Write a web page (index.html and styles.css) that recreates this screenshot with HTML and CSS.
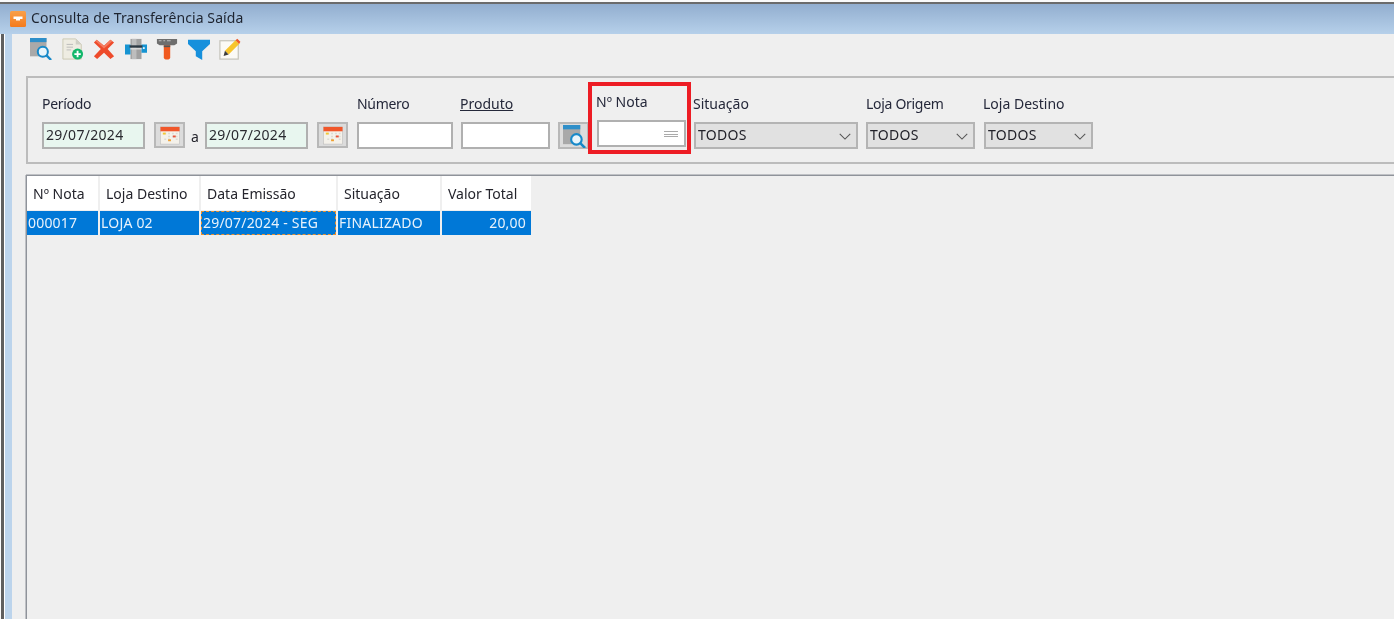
FILE: index.html
```html
<!DOCTYPE html>
<html lang="pt-BR">
<head>
<meta charset="utf-8">
<title>Consulta de Transferência Saída</title>
<link rel="stylesheet" href="styles.css">
</head>
<body>
<svg class="defs" width="0" height="0" aria-hidden="true">
  <symbol id="i-search" viewBox="0 0 24 24">
    <rect x="0" y="0" width="18" height="20" fill="#a9a9a9"/>
    <rect x="0" y="0" width="18" height="4.500" fill="#2f8fc9"/>
    <circle cx="14" cy="15" r="5.500" fill="#e9f5fb" stroke="#1789c9" stroke-width="2.200"/>
    <path d="M18 19l5 5" stroke="#1789c9" stroke-width="2.600" fill="none"/>
  </symbol>
  <symbol id="i-cal" viewBox="0 0 24 22">
    <rect x="2" y="2" width="20" height="18" fill="#f4f1ea" stroke="#bbb" stroke-width=".6"/>
    <rect x="2" y="2" width="20" height="4.600" fill="#f0562a"/>
    <path d="M6 9h2M10 9h2M14 9h2M18 9h2M10 12h2M14 12h2M18 12h2M6 15h2M10 15h2M18 15h2" stroke="#dcdad4" stroke-width="1.600"/>
    <rect x="4.500" y="8" width="3" height="2" fill="#f3c733"/>
    <rect x="15" y="11" width="3" height="2" fill="#e8553a"/>
    <rect x="10" y="15" width="3" height="2" fill="#f0a030"/>
  </symbol>
</svg>
<div class="window">
  <header class="titlebar">
    <svg class="app-icon" viewBox="0 0 16 16"><defs><linearGradient id="og" x1="0" y1="0" x2="0" y2="1"><stop offset="0" stop-color="#f9a04a"/><stop offset="1" stop-color="#f47a1c"/></linearGradient></defs><rect width="16" height="16" rx="1.500" fill="url(#og)"/><path d="M3.500 5.500h9v2.500H10v1.500H6V8H3.500z" fill="#fff"/></svg>
    <span>Consulta de Transferência Saída</span>
  </header>
  <div class="shell">
    <div class="content">
      <nav class="toolbar">
        <svg class="tool" viewBox="0 0 24 24"><use href="#i-search"/></svg>
        <svg class="tool" viewBox="0 0 24 24"><path d="M1 1h14l6 6v16H1z" fill="#eeece2" stroke="#c9c7b0"/><path d="M15 1v6h6z" fill="#cfcfc6"/><path d="M5 7h7M5 10h7M5 13h5" stroke="#b9b9b9"/><circle cx="17" cy="17.500" r="6" fill="#12b76a"/><path d="M17 14v7M13.500 17.500h7" stroke="#fff" stroke-width="2"/></svg>
        <svg class="tool" viewBox="0 0 24 24"><path d="M4 2l8 6.500L19 2l4 3-7 7 7 8-4 3-7-7-7.500 7L1 20l7.500-8L1 5z" fill="#ee4b2b"/><path d="M4 2l8 6.500L19 2l2 1.500-9 8-9-8z" fill="#f47a5e"/></svg>
        <svg class="tool" viewBox="0 0 24 24"><rect x="6" y="1" width="12" height="22" fill="#a0a0a0"/><rect x="7.500" y="1" width="5" height="22" fill="#bdbdbd"/><path d="M0 7h6v11H0zM18 7h6v9h-6z" fill="#1694d2"/><rect x="5" y="8" width="14" height="2.500" fill="#2d3a44"/><rect x="19.500" y="10" width="2" height="2" fill="#e8f4fa"/><rect x="6" y="11" width="12" height="1.500" fill="#dcdcdc"/></svg>
        <svg class="tool" viewBox="0 0 24 24"><path d="M1 1h22v5l-3 2H4L1 6z" fill="#6e6e6e"/><path d="M3 3h3M8 3h2M12 3h4" stroke="#c4c4c4"/><path d="M8.500 8h7v13q0 2.500-3.500 2.500T8.500 21z" fill="#f0591f"/><rect x="8.500" y="8" width="7" height="2" fill="#555"/></svg>
        <svg class="tool" viewBox="0 0 24 24"><path d="M0 2h24v4.500l-8.500 8V24l-7-4v-5.500L0 6.500z" fill="#1690dc"/></svg>
        <svg class="tool" viewBox="0 0 24 24"><rect x="1" y="3" width="20" height="20" fill="#fbfaf6" stroke="#c5c3ba" stroke-width="1.300"/><path d="M6.500 14L18 2.500l4 4L10.500 18z" fill="#f7c52d"/><path d="M18 2.500L20 .8l3.300 3.200-1.300 2.500z" fill="#ee5a2a"/><path d="M6.500 14l-1.500 5.500 5.500-1.500z" fill="#3c3c3c"/></svg>
      </nav>
      <form class="filters">
        <div class="field">
          <label class="lbl tight">Período</label>
          <div class="row">
            <div class="input date">29/07/2024</div>
            <button type="button" class="btn cal-a"><svg class="btn-ico" viewBox="0 0 24 22"><use href="#i-cal"/></svg></button>
            <span class="sep">a</span>
            <div class="input date">29/07/2024</div>
            <button type="button" class="btn cal-b"><svg class="btn-ico" viewBox="0 0 24 22"><use href="#i-cal"/></svg></button>
          </div>
        </div>
        <div class="field numero">
          <label class="lbl tight">Número</label>
          <div class="input w-numero"></div>
        </div>
        <div class="field produto">
          <label class="lbl link">Produto</label>
          <div class="row">
            <div class="input w-produto"></div>
            <button type="button" class="btn find"><svg class="btn-ico" viewBox="0 0 24 24"><use href="#i-search"/></svg></button>
          </div>
        </div>
        <div class="field nota">
          <span class="highlight"></span>
          <label class="lbl">Nº Nota</label>
          <div class="input w-nota"><span class="lines"></span></div>
        </div>
        <div class="field situacao">
          <label class="lbl">Situação</label>
          <div class="select w-sit">TODOS<svg class="chev" viewBox="0 0 14 8"><path d="M1 1l6 6 6-6"/></svg></div>
        </div>
        <div class="field origem">
          <label class="lbl tight">Loja Origem</label>
          <div class="select w-loja">TODOS<svg class="chev" viewBox="0 0 14 8"><path d="M1 1l6 6 6-6"/></svg></div>
        </div>
        <div class="field destino">
          <label class="lbl">Loja Destino</label>
          <div class="select w-loja">TODOS<svg class="chev" viewBox="0 0 14 8"><path d="M1 1l6 6 6-6"/></svg></div>
        </div>
      </form>
      <section class="grid-box">
        <div class="grid">
          <div class="th">Nº Nota</div>
          <div class="th">Loja Destino</div>
          <div class="th">Data Emissão</div>
          <div class="th">Situação</div>
          <div class="th">Valor Total</div>
          <div class="td">000017</div>
          <div class="td">LOJA 02</div>
          <div class="td focus">29/07/2024 - SEG</div>
          <div class="td">FINALIZADO</div>
          <div class="td num">20,00</div>
        </div>
      </section>
    </div>
  </div>
</div>
</body>
</html>
```
FILE: styles.css
```css
* { box-sizing: border-box; }
html, body { margin: 0; height: 100%; overflow: hidden; }
body {
  background: #fafafa;
  color: #26262e;
  font-family: "Noto Sans", "Open Sans", sans-serif;
  font-size: 14px;
  padding-top: 2px;
}
.defs { position: absolute; }
.window { display: flex; flex-direction: column; height: 617px; border-top: 2px solid #6b6b6b; filter: blur(.4px); }
.titlebar {
  height: 30px; flex: none;
  display: flex; align-items: center; gap: 5px; padding: 0 0 4px 10px;
  background: linear-gradient(#92aecf, #b6d0ea);
  color: #1e2430;
  letter-spacing: .09px;
}
.app-icon { width: 16px; height: 16px; flex: none; margin-top: 3px; }
.shell {
  flex: 1; min-height: 0;
  padding-left: 8px;
  margin-left: 1px;
  background: #bcd4ec;
  border-left: 3px solid #5f5f5f;
  box-shadow: inset 1px 0 0 #fff;
}
.content { height: 100%; background: #efefef; padding-left: 14px; display: flex; flex-direction: column; }
.toolbar { height: 42px; flex: none; display: flex; gap: 9.500px; padding: 4px 0 0 4px; align-items: flex-start; }
.tool { width: 22px; height: 22px; flex: none; }

.filters {
  height: 88px; flex: none;
  border: 2px solid #bcbcbc; border-right: 0;
  display: flex; align-items: flex-start;
  padding: 16px 0 0 14px;
}
.field { display: flex; flex-direction: column; flex: none; position: relative; }
.lbl { height: 28px; line-height: 20px; display: block; color: #25283a; margin-left: -1px; }
.tight { letter-spacing: -.3px; margin-left: 0; }
.link { text-decoration: underline; align-self: flex-start; }
.row { display: flex; align-items: flex-start; }
.input {
  height: 27px; background: #fff; border: 2px solid #b0b0b0;
  line-height: 22px; padding-left: 2px; color: #2a2a30; position: relative;
}
.date { width: 103px; background: #e8f6ef; letter-spacing: .3px; }
.btn {
  width: 31px; height: 26px; margin: 0; padding: 0; flex: none;
  border: 2px solid #b8b8b8; background: #dcdcdc;
  display: flex; align-items: center; justify-content: center;
}
.btn-ico { width: 24px; height: 21px; }
.find .btn-ico { width: 26px; height: 23px; margin-left: 2px; margin-top: 1px; }
.cal-a { margin-left: 9px; }
.sep { width: 20px; margin-top: 5px; padding-left: 6px; line-height: 20px; }
.cal-b { margin-left: 9px; }
.numero { margin-left: 9px; }
.w-numero { width: 96px; }
.produto { margin-left: 8px; }
.w-produto { width: 89px; }
.find { margin-left: 8px; width: 31px; height: 27px; }
.nota { margin-left: 8px; margin-top: -2px; }
.w-nota { width: 89px; }
.highlight {
  position: absolute; left: -9px; top: -10px; width: 103px; height: 72px;
  border: 4px solid #ed1c24;
}
.lines { position: absolute; right: 6px; top: 9px; width: 14px; height: 6px; border-top: 1px solid #aaa; border-bottom: 1px solid #aaa; }
.lines::before { content: ""; position: absolute; left: 0; right: 0; top: 1.500px; border-top: 1px solid #aaa; }
.situacao { margin-left: 8px; }
.select {
  height: 27px; border: 2px solid #b4b4b4; background: #e1e1e1;
  line-height: 23px; padding: 0 0 2px 2px; display: flex; justify-content: space-between; align-items: center; color: #22222a;
  letter-spacing: .3px;
}
.w-sit { width: 164px; }
.w-loja { width: 109px; }
.chev { width: 14px; height: 7px; margin: 3px 4px 0 0; fill: none; stroke: #555; stroke-width: 1.200; }
.origem { margin-left: 8px; }
.destino { margin-left: 9px; }

.grid-box {
  flex: 1; margin-top: 11px;
  border-top: 1px solid #8f939a; border-left: 1px solid #8f939a;
  box-shadow: 0 -1px 0 #bfc1c5, -1px 0 0 #bfc1c5;
}
.grid { display: grid; grid-template-columns: 71px 99px 135px 102px 89px; column-gap: 2px; width: max-content; }
.th { height: 34px; background: #fff; line-height: 36px; padding-left: 6px; color: #25252d; }
.td { height: 24px; margin-top: 1px; background: #0078d7; color: #e8f2fb; line-height: 24px; padding-left: 1px; letter-spacing: .2px; }
.focus { outline: 1px dashed #e89030; outline-offset: -1px; padding-left: 2px; }
.num { text-align: right; padding-right: 5px; }
```
